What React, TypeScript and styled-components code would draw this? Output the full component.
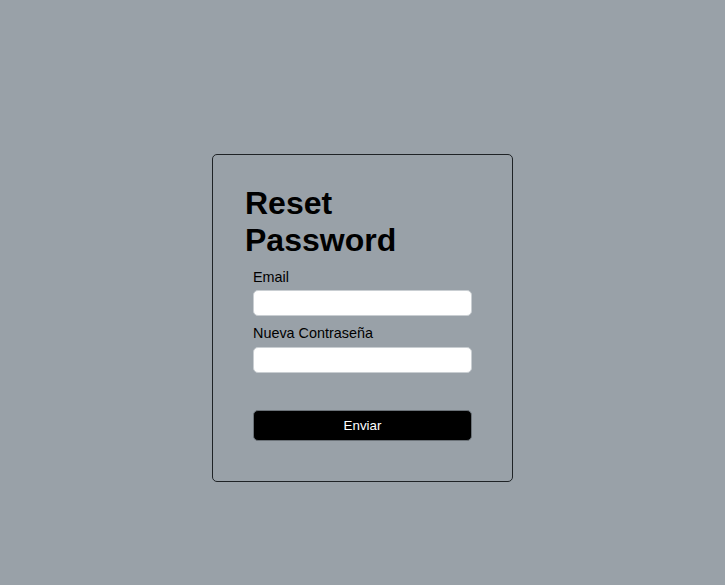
import React from "react";
import styled, { createGlobalStyle } from "styled-components";

const Global = createGlobalStyle`
  html, body {
    margin: 0;
    padding: 0;
    background: #99a1a8;
    font-family: "Liberation Sans", Arial, Helvetica, sans-serif;
    color: #000;
  }
  * { box-sizing: border-box; }
`;

const Page = styled.div`
  min-height: 585px;
  display: flex;
  justify-content: center;
  align-items: flex-start;
  padding-top: 154px;
`;

const Card = styled.div`
  width: 301px;
  border: 1px solid #1f2326;
  border-radius: 5px;
  padding: 30px 32px 40px;
`;

const Title = styled.h1`
  margin: 0 0 10px;
  font-size: 32px;
  line-height: 36.8px;
  font-weight: 700;
`;

const Form = styled.form`
  display: flex;
  flex-direction: column;
  padding: 0 8px;
`;

const Label = styled.label`
  font-size: 14.4px;
  line-height: 16.5px;
  margin-bottom: 5px;
`;

const Input = styled.input<{ $last?: boolean }>`
  height: 26px;
  border: 1px solid #c9ced2;
  border-radius: 5px;
  background: #fff;
  margin: 0 0 ${(p) => (p.$last ? "37px" : "9px")};
  padding: 0 8px;
  font-size: 13.33px;
  outline: none;
`;

const Button = styled.button`
  height: 31px;
  border: 1px solid #6b7278;
  border-radius: 5px;
  background: #000;
  color: #fff;
  font-family: "Liberation Sans", Arial, sans-serif;
  font-size: 13.33px;
  cursor: pointer;
`;

export default function App() {
  return (
    <>
      <Global />
      <Page>
        <Card>
          <Title>Reset Password</Title>
          <Form onSubmit={(e) => e.preventDefault()}>
            <Label htmlFor="email">Email</Label>
            <Input id="email" type="email" />
            <Label htmlFor="pw">Nueva Contraseña</Label>
            <Input id="pw" type="password" $last />
            <Button type="submit">Enviar</Button>
          </Form>
        </Card>
      </Page>
    </>
  );
}
